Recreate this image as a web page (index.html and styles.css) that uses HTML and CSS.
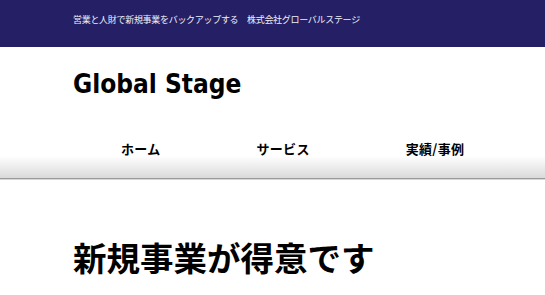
FILE: index.html
```html
<!DOCTYPE html>
<html lang="ja">
<head>
    <meta charset="UTF-8">
    <meta name="viewport" content="width=device-width, initial-scale=1.0">
    <title>Global Stage</title>
    <link rel="stylesheet" href="styles.css">
</head>
<body>

    <div class="topbar">
        <p class="tagline">営業と人財で新規事業をバックアップする　株式会社グローバルステージ</p>
    </div>

    <header class="site-header">
        <h1 class="logo">Global Stage</h1>
    </header>

    <nav class="global-nav">
        <ul>
            <li><a href="#">ホーム</a></li>
            <li><a href="#">サービス</a></li>
            <li><a href="#">実績/事例</a></li>
        </ul>
    </nav>

    <main class="content">
        <h2>新規事業が得意です</h2>
    </main>

</body>
</html>
```

FILE: styles.css
```css
* {
    box-sizing: border-box;
    margin: 0;
    padding: 0;
}

body {
    font-family: "DejaVu Sans", "Noto Sans CJK JP", sans-serif;
    background-color: #fff;
    color: #000;
}

.topbar {
    background-color: #252066;
    height: 47px;
    padding: 13px 73px 0;
}

.tagline {
    color: #f0f0f8;
    font-family: "Noto Sans CJK JP", sans-serif;
    font-size: 9px;
    letter-spacing: -0.3px;
    line-height: 14px;
}

.site-header {
    height: 83px;
    padding: 22px 73px 0;
}

.logo {
    font-family: "DejaVu Sans Condensed", "DejaVu Sans", sans-serif;
    font-size: 26px;
    font-weight: 700;
    line-height: 30px;
}

.global-nav {
    height: 49px;
    padding-top: 9px;
    background: linear-gradient(#fff 0, #fff 26px, #dadada 100%);
    border-bottom: 1px solid #9a9a9a;
    box-shadow: 0 1px 0 #d8d8d8;
}

.global-nav ul {
    list-style: none;
    display: flex;
    padding-left: 73px;
}

.global-nav a {
    display: block;
    padding: 0 48px;
    color: #000;
    text-decoration: none;
    font-family: "Noto Sans CJK JP", sans-serif;
    font-size: 13px;
    font-weight: 700;
    letter-spacing: 0.3px;
    line-height: 20px;
}

.content {
    padding: 58px 73px 0;
}

.content h2 {
    font-family: "Noto Sans CJK JP", sans-serif;
    font-size: 33.5px;
    font-weight: 700;
    line-height: 40px;
}
```
